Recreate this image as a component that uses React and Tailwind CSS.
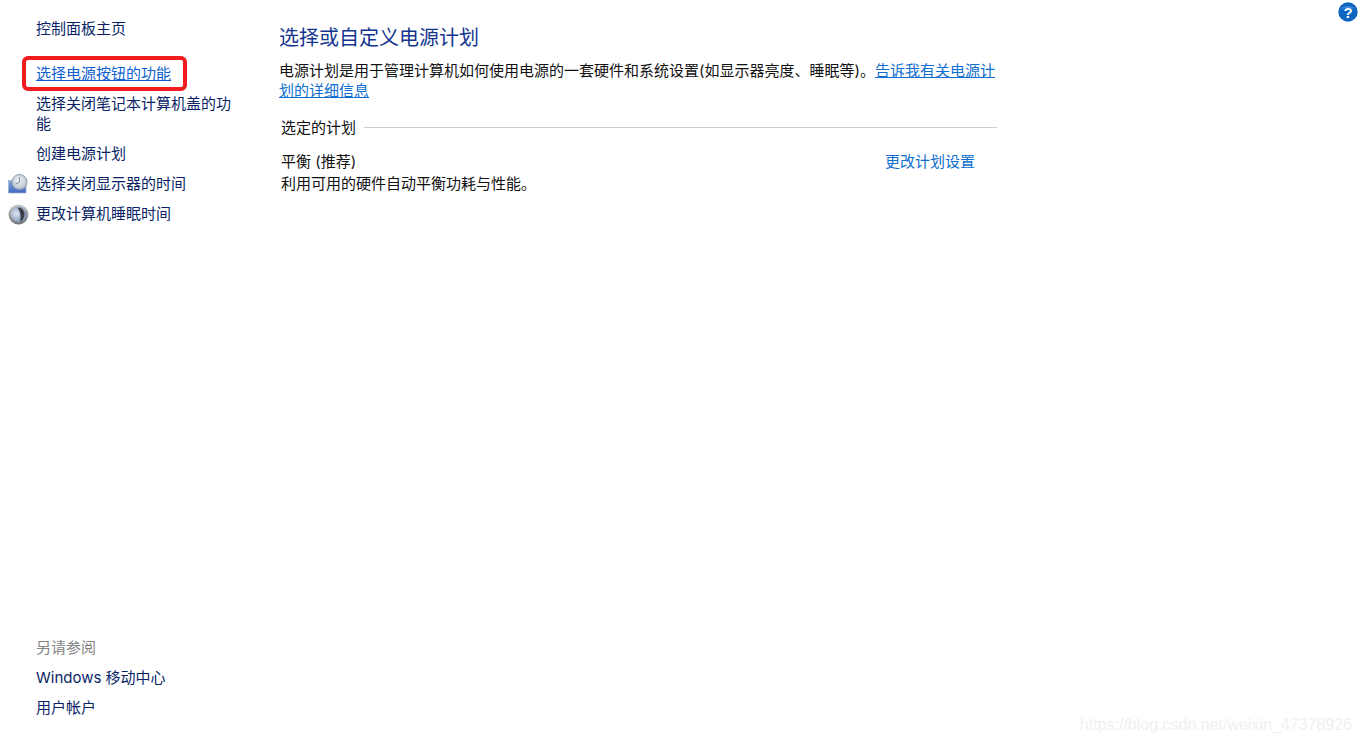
const font = { fontFamily: 'Inter, "Noto Sans CJK SC", sans-serif' };

function ClockIcon() {
  return (
    <svg width="20" height="20" viewBox="0 0 20 20" className="shrink-0">
      <defs>
        <linearGradient id="mon" x1="0" y1="0" x2="0" y2="1">
          <stop offset="0" stopColor="#7fa8e0" />
          <stop offset="1" stopColor="#3f68c0" />
        </linearGradient>
        <radialGradient id="face" cx="0.45" cy="0.4" r="0.6">
          <stop offset="0" stopColor="#f4f6f8" />
          <stop offset="1" stopColor="#b4c0cc" />
        </radialGradient>
      </defs>
      <rect x="0.5" y="6.5" width="17.5" height="12.5" fill="url(#mon)" stroke="#9fb0cc" strokeWidth="0.7" />
      <circle cx="11.5" cy="8" r="7.5" fill="url(#face)" stroke="#8e9aa8" strokeWidth="1" />
      <path d="M11.5 3.5V8.3L7.5 10" fill="none" stroke="#7d8894" strokeWidth="1" />
    </svg>
  );
}

function MoonIcon() {
  return (
    <svg width="21" height="21" viewBox="0 0 21 21" className="shrink-0">
      <defs>
        <radialGradient id="orb" cx="0.35" cy="0.45" r="0.7">
          <stop offset="0" stopColor="#dfe6f2" />
          <stop offset="1" stopColor="#7186aa" />
        </radialGradient>
        <linearGradient id="rim" x1="0" y1="0" x2="0" y2="1">
          <stop offset="0" stopColor="#c8cacc" />
          <stop offset="1" stopColor="#6f7173" />
        </linearGradient>
      </defs>
      <circle cx="10.5" cy="10.5" r="10" fill="url(#rim)" />
      <circle cx="10.5" cy="10.5" r="7.8" fill="url(#orb)" />
      <path d="M9.5 3.6C14 3.4 16.6 7 16.4 10.5 16.2 14 14.4 16.6 12 17.4 13.4 13 12.4 7.5 9.5 3.6Z" fill="#3a3d44" />
    </svg>
  );
}

function HelpIcon() {
  return (
    <svg width="20" height="20" viewBox="0 0 20 20">
      <circle cx="10" cy="10" r="9.7" fill="#0f66c0" />
      <path d="M3 7C5 3 15 3 17 7 13 5.5 7 5.5 3 7Z" fill="#3f8ad6" />
      <text x="10" y="15.5" textAnchor="middle" fontSize="15" fontWeight="700" fill="#ffffff" fontFamily="Liberation Sans, sans-serif">?</text>
    </svg>
  );
}

function NavRow({ icon, children, className = "" }) {
  return (
    <div className={`flex items-center h-[30px] ${className}`}>
      <div className="w-[36px] pl-2 flex items-center shrink-0">{icon}</div>
      <span>{children}</span>
    </div>
  );
}

export default function App() {
  return (
    <div className="relative flex h-[742px] w-full overflow-hidden bg-white text-[15px] leading-[20px]" style={font}>
      <aside className="flex w-[279px] shrink-0 flex-col justify-between pt-[14px] pb-[19px] text-[#0a1f66]">
        <div className="flex flex-col">
          <NavRow>控制面板主页</NavRow>
          <div className="relative mt-[15px]">
            <NavRow>
              <a className="text-[#0f5fd0] underline">选择电源按钮的功能</a>
            </NavRow>
            <div className="absolute left-[22px] top-[-3px] h-[35px] w-[165px] rounded-[6px] border-[4px] border-[#f01c20]" />
          </div>
          <div className="flex py-[5px]">
            <div className="w-[36px] shrink-0" />
            <span className="w-[200px]">选择关闭笔记本计算机盖的功能</span>
          </div>
          <NavRow>创建电源计划</NavRow>
          <NavRow icon={<ClockIcon />}>选择关闭显示器的时间</NavRow>
          <NavRow icon={<MoonIcon />}>更改计算机睡眠时间</NavRow>
        </div>
        <div className="flex flex-col">
          <NavRow><span className="text-[#858585]">另请参阅</span></NavRow>
          <NavRow>Windows 移动中心</NavRow>
          <NavRow>用户帐户</NavRow>
        </div>
      </aside>

      <main className="w-[718px] pt-[24px] text-[#111111]">
        <h1 className="text-[20px] leading-[28px] font-normal text-[#14358f]">选择或自定义电源计划</h1>
        <p className="mt-[9px]">
          电源计划是用于管理计算机如何使用电源的一套硬件和系统设置(如显示器亮度、睡眠等)。
          <a className="text-[#0f6fd0] underline">告诉我有关电源计划的详细信息</a>
        </p>
        <div className="mt-[17px] flex items-center pl-[2px]">
          <span>选定的计划</span>
          <div className="mb-[2px] ml-2 h-px flex-1 bg-[#cfcfcf]" />
        </div>
        <div className="mt-[13px] flex items-start justify-between pl-[2px] pr-[22px]">
          <div>
            <div className="leading-[22px]">平衡 (推荐)</div>
            <div className="mt-[1px]">利用可用的硬件自动平衡功耗与性能。</div>
          </div>
          <a className="leading-[22px] text-[#0f6fd0]">更改计划设置</a>
        </div>
      </main>

      <div className="absolute right-[3px] top-[2px]"><HelpIcon /></div>
      <div className="absolute bottom-[7px] right-[9px] text-[16px] text-[#f0f0f0]" style={{ fontFamily: '"Liberation Sans", sans-serif' }}>
        https://blog.csdn.net/weixin_47378926
      </div>
    </div>
  );
}
